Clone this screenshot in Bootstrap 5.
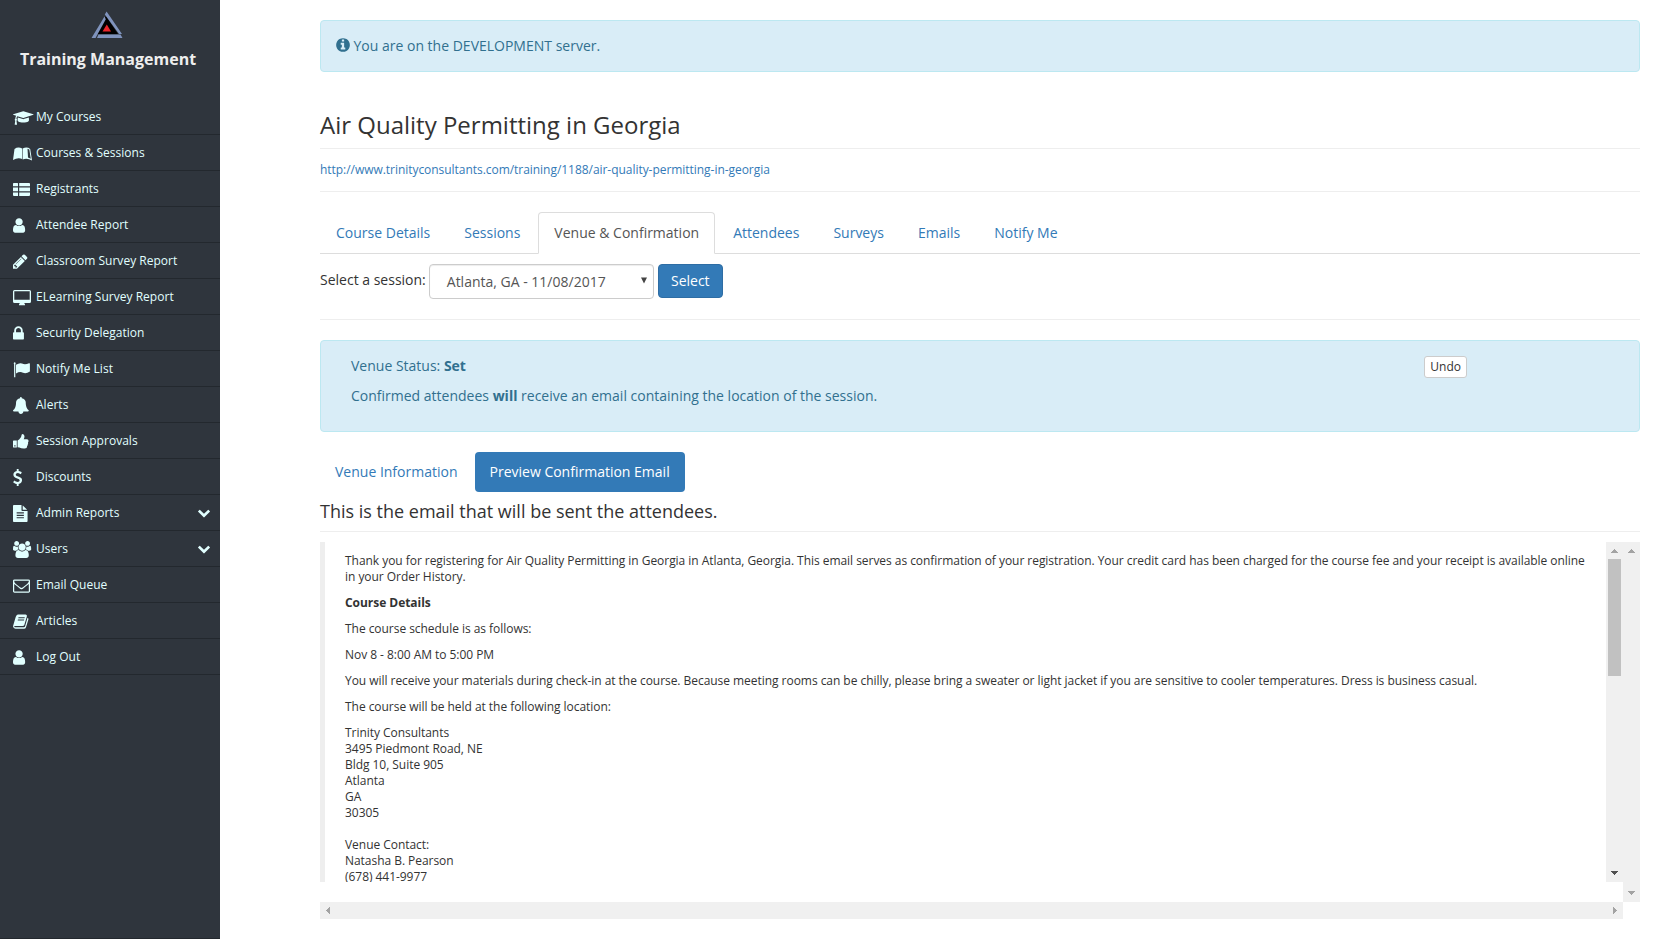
<!DOCTYPE html>
<html lang="en">
<head>
<meta charset="utf-8">
<meta name="viewport" content="width=device-width, initial-scale=1">
<title>Training Management</title>
<link href="https://cdn.jsdelivr.net/npm/bootstrap@5.3.0/dist/css/bootstrap.min.css" rel="stylesheet">
<style>
  body { font-family: "Open Sans", "Noto Sans", sans-serif; font-size: 14px; line-height: 20px; color: #333; background: #fff; overflow: hidden; }
  a { color: #337ab7; text-decoration: none; }
  p { margin-bottom: 10px; }
  .sidebar { width: 220px; background: #2f353d; color: #e1ffff; font-size: 12px; border-bottom: 1px solid #23282e; }
  .brand { height: 99px; padding-top: 11px; }
  .brand-name { font-size: 16px; font-weight: 700; line-height: 24px; color: #eee; margin-top: 8px; margin-right: 4px; }
  .side-link { height: 36px; padding: 1px 10px 0 13px; color: #e1ffff; border-bottom: 1px solid #23282e; white-space: nowrap; letter-spacing: .02px; }
  .side-link .ico { width: 23px; height: 17px; flex: none; }
  .side-link svg, .info-ico { height: 17px; fill: currentColor; display: block; overflow: visible; }
  .side-link .ico .cap-ico { height: 16px; margin-top: 1px; }
  .side-link .caret-ico { height: 12px; }
  .main-col { padding: 20px 40px 0 100px; min-width: 0; }
  .alert-box { background: #d9edf7; border: 1px solid #bce8f1; border-radius: 4px; color: #31708f; }
  .page-title { font-size: 24px; line-height: 26px; font-weight: 400; margin: 40px 0 0; padding-bottom: 10px; border-bottom: 1px solid #eee; }
  .rule { border-top: 1px solid #eee; }
  .course-url { font-size: 12px; letter-spacing: -.042px; }
  .nav-tabs { --bs-nav-tabs-border-color: #ddd; margin-top: 20px; height: 42px; }
  .nav-tabs .nav-link { padding: 10px 15px; margin-right: 2px; color: #337ab7; border-radius: 4px 4px 0 0; }
  .nav-tabs .nav-link.active { color: #555; border-color: #ddd #ddd #fff; }
  .session-select { width: 225px; height: 35px; border: 1px solid #ccc; border-radius: 4px; color: #555; padding: 0 6px 0 17px; margin: 0 4px 0 3px; box-shadow: inset 0 1px 1px rgba(0,0,0,.075); }
  .btn-blue { background: #337ab7; border: 1px solid #2e6da4; color: #fff; font-size: 14px; line-height: 20px; padding: 6px 0; width: 65px; border-radius: 4px; height: 34px; }
  .btn-undo { background: #fff; border: 1px solid #ccc; color: #333; font-size: 12px; line-height: 18px; padding: 1px 5px; border-radius: 3px; height: 22px; margin: 0 172px 0 0; }
  .nav-pills .nav-link { padding: 10px 15px; color: #337ab7; border-radius: 4px; height: 40px; }
  .nav-pills .nav-link.active { background: #337ab7; color: #fff; }
  .mail-title { font-size: 18px; line-height: 20px; font-weight: 400; margin: 0; padding: 9px 0 10px; border-bottom: 1px solid #eee; }
  .mail-body { height: 340px; border-left: 5px solid #eee; padding: 11px 19px 0 20px; font-size: 12px; line-height: 16px; letter-spacing: -.042px; overflow: hidden; min-width: 0; }
  .track { width: 17px; background: #f0f0f0; padding: 7px 0; }
  .thumb { width: 13px; height: 117px; background: #c1c1c1; margin-top: 6px; }
  .track-h { height: 17px; width: 1303px; background: #f0f0f0; padding: 0 6px; }
  .track svg, .track-h svg { display: block; fill: #a3a3a3; }
  .track svg.dark { fill: #505050; }
</style>
</head>
<body>
<svg width="0" height="0" class="position-absolute" aria-hidden="true">
  <defs>
    <path id="chev" d="M1683 808l-742 741q-19 19-45 19t-45-19l-742-741q-19-19-19-45.5t19-45.5l166-165q19-19 45-19t45 19l531 531 531-531q19-19 45-19t45 19l166 165q19 19 19 45.5t-19 45.5z"/>
    <path id="person" d="M1280 1399q0 109-62.5 187t-150.5 78h-854q-88 0-150.5-78t-62.5-187q0-85 8.5-160.5t31.5-152 58.5-131 94-89 134.5-34.5q131 128 313 128t313-128q76 0 134.5 34.5t94 89 58.5 131 31.5 152 8.5 160.5zm-256-887q0 159-112.5 271.5t-271.5 112.5-271.5-112.5-112.5-271.5 112.5-271.5 271.5-112.5 271.5 112.5 112.5 271.5z"/>
  </defs>
</svg>
<div class="d-flex vh-100">
  <nav class="sidebar flex-shrink-0">
    <div class="brand d-flex flex-column align-items-center">
      <svg width="32" height="28" viewBox="0 0 32 28" style="margin-right:6px"><path fill="#000" d="M15 5L27 23H5z"/><path fill="#7f93bd" d="M15.6.5L31 23H28L13.800 3.500zM13.500 5.500L14.800 8.200 4.500 27H.5zM7.500 23.500H29.500L31.500 27H6z"/><path fill="#e9252b" d="M15.800 13.500L20 20.500H11.500z"/></svg>
      <div class="brand-name">Training Management</div>
    </div>
    <a class="side-link d-flex align-items-center" href="#"><span class="ico"><svg class="cap-ico" viewBox="0 0 2304 1792"><path d="M1774 836l18 316q4 69-82 128t-235 93.500-323 34.500-323-34.500-235-93.500-82-128l18-316 574 181q22 7 48 7t48-7zm530-324q0 23-22 31l-1120 352q-4 1-10 1t-10-1l-652-206q-43 34-71 111.500t-34 178.500q63 36 63 109 0 69-58 107l58 433q2 14-8 25-9 11-24 11h-192q-15 0-24-11-10-11-8-25l58-433q-58-38-58-107 0-73 65-111 11-207 98-330l-333-104q-22-8-22-31t22-31l1120-352q4-1 10-1t10 1l1120 352q22 8 22 31z"/></svg></span>My Courses</a>
    <a class="side-link d-flex align-items-center" href="#"><span class="ico"><svg viewBox="0 0 19 17"><path d="M0 15L1.500 4Q5 1.500 9.200 3.500V14Q5 12 0 15z"/><path fill-rule="evenodd" d="M9.700 3.500Q14 1.500 17.200 4L19 15.500Q14 12.500 9.700 14.500zM14.500 3.800L15 12.500 17.800 13.800 16.300 4.500z"/></svg></span>Courses &amp; Sessions</a>
    <a class="side-link d-flex align-items-center" href="#"><span class="ico"><svg viewBox="0 0 17 17"><path d="M.8 2H4.500Q5 2 5 2.800V5.200H0V2.800Q0 2 .8 2zM6.200 2H16Q17 2 17 2.800V5.200H6.200zM0 6.600H5V10.200H0zM6.200 6.600H17V10.200H6.200zM0 11.500H5V15H1Q0 15 0 14zM6.200 11.500H17V14Q17 15 16 15H6.200z"/></svg></span>Registrants</a>
    <a class="side-link d-flex align-items-center" href="#"><span class="ico"><svg viewBox="0 0 1280 1792"><use href="#person"/></svg></span>Attendee Report</a>
    <a class="side-link d-flex align-items-center" href="#"><span class="ico"><svg viewBox="128 0 1536 1792"><path d="M491 1536l91-91-235-235-91 91v107h128v128h107zm523-928q0-22-22-22-10 0-17 7l-542 542q-7 7-7 17 0 22 22 22 10 0 17-7l542-542q7-7 7-17zm-54-192l416 416-832 832h-416v-416zm683 96q0 53-37 90l-166 166-416-416 166-165q36-38 90-38 53 0 91 38l235 234q37 39 37 91z"/></svg></span>Classroom Survey Report</a>
    <a class="side-link d-flex align-items-center" href="#"><span class="ico"><svg viewBox="0 0 18 17"><path fill-rule="evenodd" d="M1.500 1H16.500Q18 1 18 2.500V12.500Q18 14 16.500 14H11.200L12 15.500V16.200H6V15.500L6.800 14H1.500Q0 14 0 12.500V2.500Q0 1 1.500 1zM1.300 2.300V10.800H16.700V2.300z"/></svg></span>ELearning Survey Report</a>
    <a class="side-link d-flex align-items-center" href="#"><span class="ico"><svg viewBox="320 0 1152 1792"><path d="M640 768h512v-192q0-106-75-181t-181-75-181 75-75 181v192zm832 96v576q0 40-28 68t-68 28h-960q-40 0-68-28t-28-68v-576q0-40 28-68t68-28h32v-192q0-184 132-316t316-132 316 132 132 316v192h32q40 0 68 28t28 68z"/></svg></span>Security Delegation</a>
    <a class="side-link d-flex align-items-center" href="#"><span class="ico"><svg viewBox="0 0 17 17"><path d="M1.700 1.200A1.200 1.200 0 0 1 2.300 3.200V16.200H1.100V3.200A1.200 1.200 0 0 1 1.700 1.200zM3 3.800Q6.500 1.400 9 2.500 12 4.200 16 2.200 16.900 1.900 16.900 2.800V10.500Q13 13 10 11.700 7 10 3 12.400z"/></svg></span>Notify Me List</a>
    <a class="side-link d-flex align-items-center" href="#"><span class="ico"><svg viewBox="64 0 1664 1792"><path d="M1728 1408q0 52-38 90t-90 38h-448q0 106-75 181t-181 75-181-75-75-181h-448q-52 0-90-38t-38-90q50-42 91-88t85-119.500 74.500-158.500 50-206 19.500-260q0-152 117-282.500t307-158.500q-8-19-8-39 0-40 28-68t68-28 68 28 28 68q0 20-8 39 190 28 307 158.500t117 282.500q0 139 19.500 260t50 206 74.500 158.500 85 119.500 91 88z"/></svg></span>Alerts</a>
    <a class="side-link d-flex align-items-center" href="#"><span class="ico"><svg viewBox="0 0 16 17"><path fill-rule="evenodd" d="M.6 7.500H3.800V14.500H.6Q0 14.500 0 14V8.100Q0 7.500.6 7.500zM1.300 12.300V13.500H2.500V12.300zM4.600 7.600Q6.300 6.800 7.300 5.100 8.200 4.200 8.500 2.200 8.800 1 9.500 1 11.500 1.200 11.500 3.500 11.400 5 10.700 6.200H14Q15.600 6.400 15.600 8 15.500 8.800 15 9.200 15.500 10.200 14.800 11.200 15 12.200 14.100 13 14.200 15.500 11.600 15.500 8.500 15.700 6.300 14.600 5.500 14.300 4.600 14.300z"/></svg></span>Session Approvals</a>
    <a class="side-link d-flex align-items-center" href="#"><span class="ico"><svg viewBox="410 0 960 1792"><path d="M1362 1185q0 153-99.500 263.500t-258.500 136.500v175q0 14-9 23t-23 9h-135q-13 0-22.500-9.500t-9.500-22.500v-175q-66-9-127.500-31t-101.500-44.500-74-48-46.500-37.500-17.500-18q-17-21-2-41l103-135q7-10 23-12 15-2 24 9l2 2q113 99 243 125 37 8 74 8 81 0 142.500-43t61.500-122q0-28-15-53t-33.500-42-58.500-37.500-66-32-80-32.500q-39-16-61.500-25t-61.500-26.500-62.500-31-56.500-35.500-53.500-42.500-43.500-49-35.500-58-21-66.500-8.500-78q0-138 98-242t255-134v-180q0-13 9.500-22.500t22.500-9.500h135q14 0 23 9t9 23v176q57 6 110.500 23t87 33.500 63.500 37.500 39 29 15 14q17 18 5 38l-81 146q-8 15-23 16-14 3-27-7-3-3-14.500-12t-39-26.500-58.500-32-74.500-26-85.500-11.500q-95 0-155 43t-60 111q0 26 8.500 48t29.500 41.500 39.500 33 56 31 60.500 27 70 27.500q53 20 81 31.500t76 35 75.500 42.500 62 50 53 63.500 31.500 76.500 13 94z"/></svg></span>Discounts</a>
    <a class="side-link d-flex align-items-center" href="#"><span class="ico"><svg viewBox="128 0 1536 1792"><path d="M1596 476q14 14 28 36h-472v-472q22 14 36 28zm-476 164h544v1056q0 40-28 68t-68 28h-1344q-40 0-68-28t-28-68v-1600q0-40 28-68t68-28h800v544q0 40 28 68t68 28zm160 736v-64q0-14-9-23t-23-9h-704q-14 0-23 9t-9 23v64q0 14 9 23t23 9h704q14 0 23-9t9-23zm0-256v-64q0-14-9-23t-23-9h-704q-14 0-23 9t-9 23v64q0 14 9 23t23 9h704q14 0 23-9t9-23zm0-256v-64q0-14-9-23t-23-9h-704q-14 0-23 9t-9 23v64q0 14 9 23t23 9h704q14 0 23-9t9-23z"/></svg></span>Admin Reports<svg class="caret-ico ms-auto" viewBox="90 160 1612 1612"><use href="#chev"/></svg></a>
    <a class="side-link d-flex align-items-center" href="#"><span class="ico"><svg viewBox="0 0 1920 1792"><path d="M593 896q-162 5-265 128h-134q-82 0-138-40.500t-56-118.500q0-353 124-353 6 0 43.500 21t97.500 42.500 119 21.500q67 0 133-23-5 37-5 66 0 139 81 256zm1071 637q0 120-73 189.500t-194 69.500h-874q-121 0-194-69.500t-73-189.500q0-53 3.500-103.500t14-109 26.500-108.500 43-97.500 62-81 85.500-53.500 111.500-20q10 0 43 21.500t73 48 107 48 135 21.500 135-21.500 107-48 73-48 43-21.500q61 0 111.500 20t85.500 53.500 62 81 43 97.500 26.500 108.500 14 109 3.500 103.500zm-1024-1277q0 106-75 181t-181 75-181-75-75-181 75-181 181-75 181 75 75 181zm704 384q0 159-112.500 271.500t-271.500 112.500-271.500-112.500-112.500-271.500 112.500-271.500 271.500-112.500 271.500 112.500 112.500 271.500zm576 225q0 78-56 118.500t-138 40.500h-134q-103-123-265-128 81-117 81-256 0-29-5-66 66 23 133 23 59 0 119-21.500t97.500-42.500 43.500-21q124 0 124 353zm-128-609q0 106-75 181t-181 75-181-75-75-181 75-181 181-75 181 75 75 181z"/></svg></span>Users<svg class="caret-ico ms-auto" viewBox="90 160 1612 1612"><use href="#chev"/></svg></a>
    <a class="side-link d-flex align-items-center" href="#"><span class="ico"><svg viewBox="0 0 1792 1792"><path d="M1664 1504v-768q-32 36-69 66-268 206-426 338-51 43-83 67t-86.500 48.500-102.500 24.500h-2q-48 0-102.500-24.500t-86.500-48.500-83-67q-158-132-426-338-37-30-69-66v768q0 13 9.500 22.500t22.500 9.500h1472q13 0 22.500-9.500t9.500-22.500zm0-1051v-24.500l-.5-13-3-12.500-5.500-9-9-7.500-14-2.500h-1472q-13 0-22.500 9.500t-9.500 22.500q0 168 147 284 193 152 401 317 6 5 35 29.500t46 37.500 44.500 31.500 50.500 27.500 43 9h2q20 0 43-9t50.500-27.500 44.500-31.500 46-37.500 35-29.500q208-165 401-317 54-43 100.500-115.500t46.500-131.500zm128-37v1088q0 66-47 113t-113 47h-1472q-66 0-113-47t-47-113v-1088q0-66 47-113t113-47h1472q66 0 113 47t47 113z"/></svg></span>Email Queue</a>
    <a class="side-link d-flex align-items-center" href="#"><span class="ico"><svg viewBox="0 0 16 17"><path fill-rule="evenodd" d="M4.800 1.500H12.500Q14.300 1.700 13.900 3.300L11.300 12Q10.900 13 9.500 13H2Q1 13 1.200 13.700 1.500 14.300 2.500 14.300H10.800Q11.800 14.300 12.100 13.300L14.500 4.800Q15.800 5.300 15.400 6.600L13 14.300Q12.500 15.800 11 15.800H2.500Q.3 15.500 0 13.200L2.700 4Q3.500 1.500 4.800 1.500zM5.500 4.300L5.300 5.200H11.500L11.800 4.300zM4.900 6.500L4.700 7.400H10.900L11.200 6.500z"/></svg></span>Articles</a>
    <a class="side-link d-flex align-items-center" href="#"><span class="ico"><svg viewBox="0 0 1280 1792"><use href="#person"/></svg></span>Log Out</a>
  </nav>

  <main class="main-col flex-grow-1">
    <div class="alert-box d-flex" style="height:52px;padding:15px">
      <svg class="info-ico" style="height:16px;width:14px;margin:1px 3.5px 0 0" viewBox="128 0 1536 1792"><path d="M1152 1376v-160q0-14-9-23t-23-9h-96v-512q0-14-9-23t-23-9h-320q-14 0-23 9t-9 23v160q0 14 9 23t23 9h96v320h-96q-14 0-23 9t-9 23v160q0 14 9 23t23 9h448q14 0 23-9t9-23zm-128-896v-160q0-14-9-23t-23-9h-192q-14 0-23 9t-9 23v160q0 14 9 23t23 9h192q14 0 23-9t9-23zm640 416q0 209-103 385.500t-279.500 279.500-385.500 103-385.500-103-279.500-279.500-103-385.500 103-385.500 279.500-279.500 385.500-103 385.500 103 279.500 279.500 103 385.500z"/></svg>
      <span>You are on the DEVELOPMENT server.</span>
    </div>

    <h3 class="page-title">Air Quality Permitting in Georgia</h3>
    <div class="course-url" style="padding:11px 0"><a href="#">http://www.trinityconsultants.com/training/1188/air-quality-permitting-in-georgia</a></div>
    <div class="rule"></div>

    <ul class="nav nav-tabs">
      <li class="nav-item"><a class="nav-link" href="#">Course Details</a></li>
      <li class="nav-item"><a class="nav-link" href="#">Sessions</a></li>
      <li class="nav-item"><a class="nav-link active" href="#">Venue &amp; Confirmation</a></li>
      <li class="nav-item"><a class="nav-link" href="#">Attendees</a></li>
      <li class="nav-item"><a class="nav-link" href="#">Surveys</a></li>
      <li class="nav-item"><a class="nav-link" href="#">Emails</a></li>
      <li class="nav-item"><a class="nav-link" href="#">Notify Me</a></li>
    </ul>

    <div class="d-flex align-items-start" style="padding:10px 0 20px">
      <span style="padding-top:6px">Select a session:</span>
      <div class="session-select d-flex align-items-center justify-content-between">
        <span>Atlanta, GA - 11/08/2017</span>
        <svg width="6" height="7" viewBox="0 0 6 7" style="margin-bottom:2px"><path fill="#444" d="M0 .5H6L3 6.500z"/></svg>
      </div>
      <button class="btn-blue" type="button">Select</button>
    </div>
    <div class="rule"></div>

    <div class="alert-box d-flex justify-content-between align-items-start" style="height:92px;margin-top:20px;padding:15px 0 0 30px">
      <div>
        <p>Venue Status: <b>Set</b></p>
        <p>Confirmed attendees <b>will</b> receive an email containing the location of the session.</p>
      </div>
      <button class="btn-undo" type="button">Undo</button>
    </div>

    <ul class="nav nav-pills" style="margin-top:20px;gap:2px">
      <li class="nav-item"><a class="nav-link" href="#">Venue Information</a></li>
      <li class="nav-item"><a class="nav-link active" href="#">Preview Confirmation Email</a></li>
    </ul>

    <h4 class="mail-title">This is the email that will be sent the attendees.</h4>

    <div class="d-flex align-items-start" style="margin-top:10px">
      <div class="mail-body flex-grow-1">
        <p>Thank you for registering for Air Quality Permitting in Georgia in Atlanta, Georgia. This email serves as confirmation of your registration. Your credit card has been charged for the course fee and your receipt is available online in your Order History.</p>
        <p><b>Course Details</b></p>
        <p>The course schedule is as follows:</p>
        <p>Nov 8 - 8:00 AM to 5:00 PM</p>
        <p>You will receive your materials during check-in at the course. Because meeting rooms can be chilly, please bring a sweater or light jacket if you are sensitive to cooler temperatures. Dress is business casual.</p>
        <p>The course will be held at the following location:</p>
        <p>Trinity Consultants<br>3495 Piedmont Road, NE<br>Bldg 10, Suite 905<br>Atlanta<br>GA<br>30305<br><br>Venue Contact:<br>Natasha B. Pearson<br>(678) 441-9977</p>
      </div>
      <div class="track d-flex flex-column align-items-center flex-shrink-0" style="height:340px">
        <svg width="7" height="4"><path d="M3 0h1v1h1v1h1v1h1v1H0V3h1V2h1V1h1z"/></svg>
        <div class="thumb"></div>
        <svg class="dark mt-auto" width="7" height="4"><path d="M0 0h7v1H6v1H5v1H4v1H3V3H2V2H1V1H0z"/></svg>
      </div>
      <div class="track d-flex flex-column align-items-center justify-content-between flex-shrink-0" style="height:360px">
        <svg width="7" height="4"><path d="M3 0h1v1h1v1h1v1h1v1H0V3h1V2h1V1h1z"/></svg>
        <svg width="7" height="4"><path d="M0 0h7v1H6v1H5v1H4v1H3V3H2V2H1V1H0z"/></svg>
      </div>
    </div>
    <div class="track-h d-flex align-items-center justify-content-between">
      <svg width="4" height="7"><path d="M4 0v7H3V6H2V5H1V4H0V3h1V2h1V1h1V0z"/></svg>
      <svg width="4" height="7"><path d="M0 0h1v1h1v1h1v1h1v1H3v1H2v1H1v1H0z"/></svg>
    </div>
  </main>
</div>
<script src="https://cdn.jsdelivr.net/npm/bootstrap@5.3.0/dist/js/bootstrap.bundle.min.js"></script>
</body>
</html>
